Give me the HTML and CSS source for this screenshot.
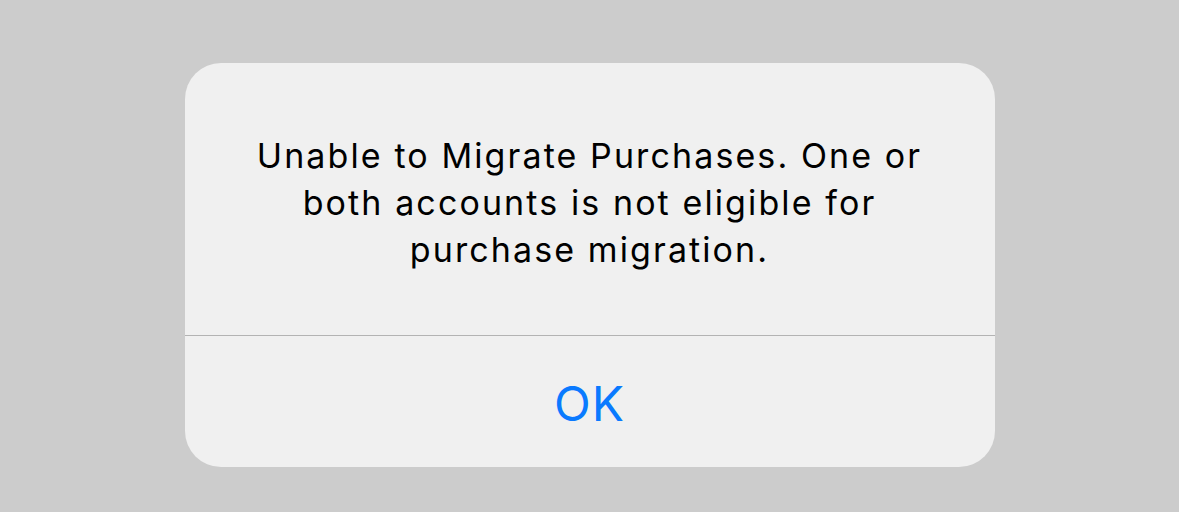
FILE: index.html
```html
<!DOCTYPE html>
<html>
<head>
<meta charset="utf-8">
<link rel="stylesheet" href="styles.css">
</head>
<body>
<div class="alert">
  <div class="alert-body">
    <p class="alert-message">Unable to Migrate Purchases. One or<br>both accounts is not eligible for<br>purchase migration.</p>
  </div>
  <div class="alert-actions">
    <span class="alert-button">OK</span>
  </div>
</div>
</body>
</html>
```
FILE: styles.css
```css
html, body {
  margin: 0;
  padding: 0;
  background: #cccccc;
  height: 100%;
}
body {
  padding-top: 63px;
  box-sizing: border-box;
  font-family: Inter, "Liberation Sans", sans-serif;
}
.alert {
  width: 810px;
  height: 404px;
  margin: 0 auto;
  background: #f0f0f0;
  border-radius: 36px;
  display: flex;
  flex-direction: column;
  overflow: hidden;
}
.alert-body {
  height: 273px;
  box-sizing: border-box;
  border-bottom: 1px solid #b3b3b3;
  display: flex;
  justify-content: center;
  padding-top: 69px;
}
.alert-message {
  margin: 0;
  text-align: center;
  font-size: 34px;
  line-height: 47px;
  color: #000;
  letter-spacing: 2.1px;
}
.alert-actions {
  flex: 1;
  display: flex;
  align-items: center;
  justify-content: center;
}
.alert-button {
  color: #0a7aff;
  font-size: 48px;
  line-height: 1;
  margin-top: 4px;
  letter-spacing: 1px;
}
```
